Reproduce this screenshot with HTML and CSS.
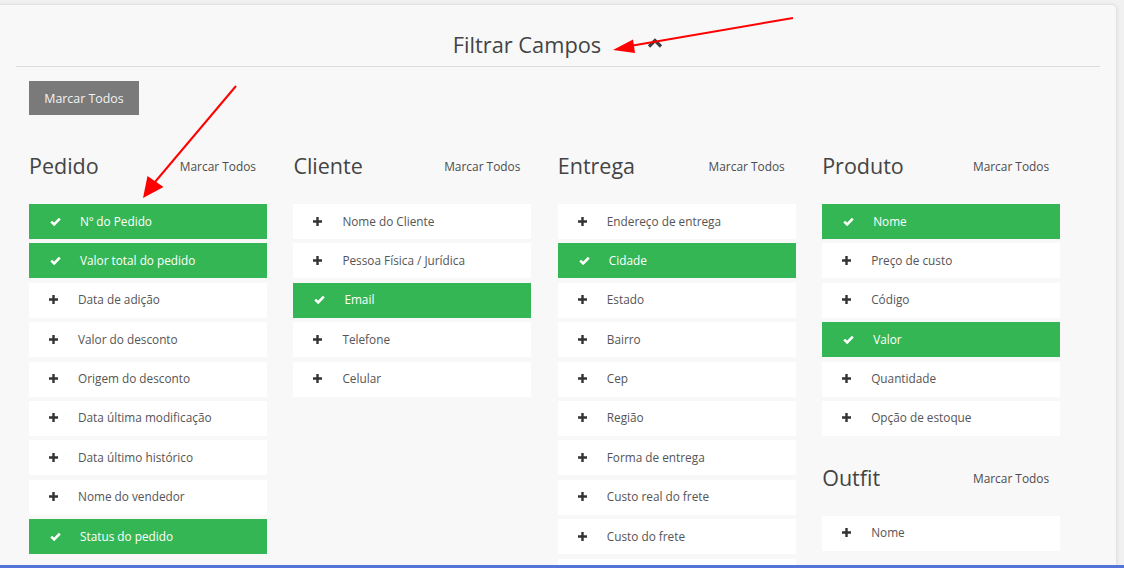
FILE: index.html
```html
<!DOCTYPE html>
<html lang="pt">
<head>
<meta charset="utf-8">
<title>Filtrar Campos</title>
<link rel="stylesheet" href="styles.css">
</head>
<body>
<div class="page">
  <div class="panel">
    <div class="panel-header">
      <h2 class="panel-title">Filtrar Campos</h2>
      <svg class="chevron" width="16" height="10" viewBox="0 0 16 10"><polyline points="2,8.5 8,2.5 14,8.5" fill="none" stroke="#3a3f44" stroke-width="3.2"/></svg>
    </div>
    <div class="panel-body">
      <button class="btn-all">Marcar Todos</button>
      <div class="columns">
        <div class="col">
          <div class="group">
            <div class="group-head"><h3>Pedido</h3><a class="mark">Marcar Todos</a></div>
            <ul class="items">
              <li class="item on"><span class="ic"><svg width="11" height="9" viewBox="0 0 11 9"><polyline points="1.2,4.6 4.2,7.4 9.8,1.6" fill="none" stroke="#fff" stroke-width="2.6"/></svg></span>Nº do Pedido</li>
              <li class="item on"><span class="ic"><svg width="11" height="9" viewBox="0 0 11 9"><polyline points="1.2,4.6 4.2,7.4 9.8,1.6" fill="none" stroke="#fff" stroke-width="2.6"/></svg></span>Valor total do pedido</li>
              <li class="item"><span class="ic"><svg width="9" height="9" viewBox="0 0 9 9"><path d="M4.5 0v9M0 4.5h9" stroke="#333" stroke-width="2.4"/></svg></span>Data de adição</li>
              <li class="item"><span class="ic"><svg width="9" height="9" viewBox="0 0 9 9"><path d="M4.5 0v9M0 4.5h9" stroke="#333" stroke-width="2.4"/></svg></span>Valor do desconto</li>
              <li class="item"><span class="ic"><svg width="9" height="9" viewBox="0 0 9 9"><path d="M4.5 0v9M0 4.5h9" stroke="#333" stroke-width="2.4"/></svg></span>Origem do desconto</li>
              <li class="item"><span class="ic"><svg width="9" height="9" viewBox="0 0 9 9"><path d="M4.5 0v9M0 4.5h9" stroke="#333" stroke-width="2.4"/></svg></span>Data última modificação</li>
              <li class="item"><span class="ic"><svg width="9" height="9" viewBox="0 0 9 9"><path d="M4.5 0v9M0 4.5h9" stroke="#333" stroke-width="2.4"/></svg></span>Data último histórico</li>
              <li class="item"><span class="ic"><svg width="9" height="9" viewBox="0 0 9 9"><path d="M4.5 0v9M0 4.5h9" stroke="#333" stroke-width="2.4"/></svg></span>Nome do vendedor</li>
              <li class="item on"><span class="ic"><svg width="11" height="9" viewBox="0 0 11 9"><polyline points="1.2,4.6 4.2,7.4 9.8,1.6" fill="none" stroke="#fff" stroke-width="2.6"/></svg></span>Status do pedido</li>
            </ul>
          </div>
        </div>
        <div class="col">
          <div class="group">
            <div class="group-head"><h3>Cliente</h3><a class="mark">Marcar Todos</a></div>
            <ul class="items">
              <li class="item"><span class="ic"><svg width="9" height="9" viewBox="0 0 9 9"><path d="M4.5 0v9M0 4.5h9" stroke="#333" stroke-width="2.4"/></svg></span>Nome do Cliente</li>
              <li class="item"><span class="ic"><svg width="9" height="9" viewBox="0 0 9 9"><path d="M4.5 0v9M0 4.5h9" stroke="#333" stroke-width="2.4"/></svg></span>Pessoa Física / Jurídica</li>
              <li class="item on"><span class="ic"><svg width="11" height="9" viewBox="0 0 11 9"><polyline points="1.2,4.6 4.2,7.4 9.8,1.6" fill="none" stroke="#fff" stroke-width="2.6"/></svg></span>Email</li>
              <li class="item"><span class="ic"><svg width="9" height="9" viewBox="0 0 9 9"><path d="M4.5 0v9M0 4.5h9" stroke="#333" stroke-width="2.4"/></svg></span>Telefone</li>
              <li class="item"><span class="ic"><svg width="9" height="9" viewBox="0 0 9 9"><path d="M4.5 0v9M0 4.5h9" stroke="#333" stroke-width="2.4"/></svg></span>Celular</li>
            </ul>
          </div>
        </div>
        <div class="col">
          <div class="group">
            <div class="group-head"><h3>Entrega</h3><a class="mark">Marcar Todos</a></div>
            <ul class="items">
              <li class="item"><span class="ic"><svg width="9" height="9" viewBox="0 0 9 9"><path d="M4.5 0v9M0 4.5h9" stroke="#333" stroke-width="2.4"/></svg></span>Endereço de entrega</li>
              <li class="item on"><span class="ic"><svg width="11" height="9" viewBox="0 0 11 9"><polyline points="1.2,4.6 4.2,7.4 9.8,1.6" fill="none" stroke="#fff" stroke-width="2.6"/></svg></span>Cidade</li>
              <li class="item"><span class="ic"><svg width="9" height="9" viewBox="0 0 9 9"><path d="M4.5 0v9M0 4.5h9" stroke="#333" stroke-width="2.4"/></svg></span>Estado</li>
              <li class="item"><span class="ic"><svg width="9" height="9" viewBox="0 0 9 9"><path d="M4.5 0v9M0 4.5h9" stroke="#333" stroke-width="2.4"/></svg></span>Bairro</li>
              <li class="item"><span class="ic"><svg width="9" height="9" viewBox="0 0 9 9"><path d="M4.5 0v9M0 4.5h9" stroke="#333" stroke-width="2.4"/></svg></span>Cep</li>
              <li class="item"><span class="ic"><svg width="9" height="9" viewBox="0 0 9 9"><path d="M4.5 0v9M0 4.5h9" stroke="#333" stroke-width="2.4"/></svg></span>Região</li>
              <li class="item"><span class="ic"><svg width="9" height="9" viewBox="0 0 9 9"><path d="M4.5 0v9M0 4.5h9" stroke="#333" stroke-width="2.4"/></svg></span>Forma de entrega</li>
              <li class="item"><span class="ic"><svg width="9" height="9" viewBox="0 0 9 9"><path d="M4.5 0v9M0 4.5h9" stroke="#333" stroke-width="2.4"/></svg></span>Custo real do frete</li>
              <li class="item"><span class="ic"><svg width="9" height="9" viewBox="0 0 9 9"><path d="M4.5 0v9M0 4.5h9" stroke="#333" stroke-width="2.4"/></svg></span>Custo do frete</li>
              <li class="item item-clipped"></li>
            </ul>
          </div>
        </div>
        <div class="col">
          <div class="group">
            <div class="group-head"><h3>Produto</h3><a class="mark">Marcar Todos</a></div>
            <ul class="items">
              <li class="item on"><span class="ic"><svg width="11" height="9" viewBox="0 0 11 9"><polyline points="1.2,4.6 4.2,7.4 9.8,1.6" fill="none" stroke="#fff" stroke-width="2.6"/></svg></span>Nome</li>
              <li class="item"><span class="ic"><svg width="9" height="9" viewBox="0 0 9 9"><path d="M4.5 0v9M0 4.5h9" stroke="#333" stroke-width="2.4"/></svg></span>Preço de custo</li>
              <li class="item"><span class="ic"><svg width="9" height="9" viewBox="0 0 9 9"><path d="M4.5 0v9M0 4.5h9" stroke="#333" stroke-width="2.4"/></svg></span>Código</li>
              <li class="item on"><span class="ic"><svg width="11" height="9" viewBox="0 0 11 9"><polyline points="1.2,4.6 4.2,7.4 9.8,1.6" fill="none" stroke="#fff" stroke-width="2.6"/></svg></span>Valor</li>
              <li class="item"><span class="ic"><svg width="9" height="9" viewBox="0 0 9 9"><path d="M4.5 0v9M0 4.5h9" stroke="#333" stroke-width="2.4"/></svg></span>Quantidade</li>
              <li class="item"><span class="ic"><svg width="9" height="9" viewBox="0 0 9 9"><path d="M4.5 0v9M0 4.5h9" stroke="#333" stroke-width="2.4"/></svg></span>Opção de estoque</li>
            </ul>
          </div>
          <div class="group group-next">
            <div class="group-head"><h3>Outfit</h3><a class="mark">Marcar Todos</a></div>
            <ul class="items">
              <li class="item"><span class="ic"><svg width="9" height="9" viewBox="0 0 9 9"><path d="M4.5 0v9M0 4.5h9" stroke="#333" stroke-width="2.4"/></svg></span>Nome</li>
            </ul>
          </div>
        </div>
      </div>
    </div>
  </div>
  <div class="bottom-bar"></div>
  <svg class="annotations" width="1124" height="568" viewBox="0 0 1124 568">
    <line x1="793" y1="18" x2="630" y2="46" stroke="#f00" stroke-width="2"/>
    <polygon points="613,50 633,39.5 635,53" fill="#f00"/>
    <line x1="236" y1="86" x2="155" y2="182" stroke="#f00" stroke-width="2"/>
    <polygon points="143,198 147.5,176 163.5,187" fill="#f00"/>
  </svg>
</div>
</body>
</html>
```

FILE: styles.css
```css
* { box-sizing: border-box; }

html, body {
  margin: 0;
  padding: 0;
}

body {
  background: #f1f1f1;
  font-family: "Open Sans", "Noto Sans", sans-serif;
  color: #555;
}

.page {
  position: relative;
  width: 1124px;
  height: 568px;
  overflow: hidden;
  display: flex;
  flex-direction: column;
}

.panel {
  flex: 1;
  min-height: 0;
  overflow: hidden;
  margin: 4px 0 0 -5px;
  width: 1122px;
  background: #f8f8f8;
  border: 1px solid #e2e2e2;
  border-bottom: none;
  border-radius: 0 5px 0 0;
  box-shadow: 0 1px 4px rgba(0, 0, 0, 0.08);
  padding: 0 16px 0 20px;
}

.panel-header {
  height: 62px;
  padding-top: 18px;
  display: flex;
  align-items: center;
  justify-content: center;
  gap: 46px;
  border-bottom: 1px solid #dcdcdc;
}

.panel-title {
  margin: 0;
  font-size: 21.8px;
  font-weight: 400;
  color: #444;
  line-height: 28px;
}

.chevron {
  display: block;
  margin-top: -3px;
}

.panel-body {
  padding: 14px 0 0 13px;
}

.btn-all {
  display: block;
  width: 110px;
  height: 34px;
  padding: 0;
  border: none;
  border-radius: 0;
  background: #7a7a7a;
  color: #f2f2f2;
  font-family: "Open Sans", "Noto Sans", sans-serif;
  font-size: 12.4px;
}

.columns {
  margin-top: 31px;
  display: grid;
  grid-template-columns: repeat(4, 238px);
  column-gap: 26.4px;
  align-items: start;
}

.group-next {
  margin-top: 22px;
}

.group-head {
  height: 40px;
  display: flex;
  align-items: center;
  justify-content: space-between;
  padding: 0 11px 0 0;
  margin-bottom: 18px;
}

.group-head h3 {
  margin: 0;
  font-size: 21.5px;
  font-weight: 400;
  color: #444;
  line-height: 30px;
}

.mark {
  font-size: 11.9px;
  color: #4d4d4d;
  cursor: pointer;
}

.items {
  list-style: none;
  margin: 0;
  padding: 0;
  display: flex;
  flex-direction: column;
  gap: 4.4px;
}

.item {
  height: 35px;
  display: flex;
  align-items: center;
  background: #fff;
  font-size: 11.8px;
  color: #555;
  padding: 0 0 2px 20px;
}

.item.on {
  background: #35b655;
  color: #fff;
  padding-left: 21px;
}

.ic {
  width: 29px;
  display: flex;
  align-items: center;
  padding-top: 1px;
}

.item.on .ic { width: 30px; }

.ic svg { display: block; }

.bottom-bar {
  height: 3px;
  flex: none;
  background: #5673d8;
}

.annotations {
  position: absolute;
  left: 0;
  top: 0;
  pointer-events: none;
}
```
